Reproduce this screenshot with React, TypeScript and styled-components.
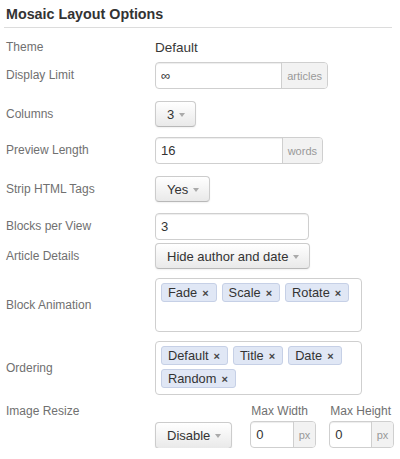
import React from "react";
import styled, { createGlobalStyle } from "styled-components";

const Global = createGlobalStyle`
  html, body { margin: 0; padding: 0; background: #fff; }
  body { font-family: "Liberation Sans", Arial, Helvetica, sans-serif; color: #333; }
`;

const Panel = styled.div`
  width: 392px;
  padding: 0 0 0 4px;
  box-sizing: border-box;
`;

const Title = styled.h2`
  margin: 0;
  padding: 5px 0 4px 2px;
  font-size: 14.3px;
  line-height: 18px;
  font-weight: bold;
  color: #333;
  border-bottom: 1px solid #dcdcdc;
`;

const Body = styled.div`
  padding-left: 2px;
`;

const Row = styled.div<{ $mt: number; $top?: boolean }>`
  display: flex;
  align-items: ${(p) => (p.$top ? "flex-start" : "center")};
  margin-top: ${(p) => p.$mt}px;
`;

const Label = styled.div`
  width: 149px;
  flex-shrink: 0;
  font-size: 12px;
  line-height: 15px;
  color: #707070;
`;

const StaticValue = styled.div`
  font-size: 13.5px;
  line-height: 19px;
  color: #383838;
`;

const InputGroup = styled.div<{ $w: number; $h?: number }>`
  display: inline-flex;
  align-items: stretch;
  box-sizing: border-box;
  width: ${(p) => p.$w}px;
  height: ${(p) => p.$h ?? 27}px;
  border: 1px solid #cfcfcf;
  border-radius: 4px;
  background: #fff;
  box-shadow: inset 0 1px 1px rgba(0, 0, 0, 0.075);
  overflow: hidden;
`;

const Field = styled.input`
  flex: 1;
  min-width: 0;
  border: none;
  outline: none;
  background: transparent;
  padding: 0 5px;
  font-family: "Liberation Sans", Arial, Helvetica, sans-serif;
  font-size: 13px;
  color: #333;
`;

const Addon = styled.span`
  display: flex;
  align-items: center;
  padding: 0 5px;
  border-left: 1px solid #cfcfcf;
  background: #f2f2f2;
  font-size: 11px;
  color: #999;
`;

const DropButton = styled.button<{ $h?: number }>`
  display: inline-flex;
  align-items: center;
  gap: 5px;
  box-sizing: border-box;
  height: ${(p) => p.$h ?? 26}px;
  padding: 0 10px 0 11px;
  border: 1px solid #cccccc;
  border-bottom-color: #b8b8b8;
  border-radius: 4px;
  background: linear-gradient(#ffffff, #e9e9e9);
  box-shadow: 0 1px 2px rgba(0, 0, 0, 0.06);
  font-family: "Liberation Sans", Arial, Helvetica, sans-serif;
  font-size: 13px;
  font-weight: normal;
  color: #333;
  cursor: pointer;
`;

const Caret = styled.span`
  width: 0;
  height: 0;
  border-left: 3.5px solid transparent;
  border-right: 3.5px solid transparent;
  border-top: 4px solid #aaa;
  margin-top: 1px;
`;

const TagBox = styled.div`
  display: flex;
  flex-wrap: wrap;
  align-content: flex-start;
  gap: 4px 5px;
  box-sizing: border-box;
  width: 207px;
  min-height: 54px;
  padding: 4px 5px;
  border: 1px solid #cfcfcf;
  border-radius: 4px;
  background: #fff;
`;

const Tag = styled.span`
  display: inline-flex;
  align-items: center;
  gap: 5px;
  box-sizing: border-box;
  height: 19px;
  padding: 0 7px 0 6px;
  border: 1px solid #c6d0e6;
  border-radius: 3px;
  background: #e0e7f5;
  font-size: 12.8px;
  color: #333;
`;

const TagX = styled.span`
  font-size: 11px;
  font-weight: bold;
  color: #444;
`;

const ResizeControls = styled.div`
  display: flex;
  align-items: flex-end;
  gap: 13px;
`;

const ResizeButtonWrap = styled.div`
  margin-right: 5px;
  margin-bottom: -1px;
`;

const SizeGroup = styled.div`
  display: flex;
  flex-direction: column;
  gap: 2px;
`;

const SizeLabel = styled.div`
  font-size: 12px;
  line-height: 15px;
  color: #707070;
  padding-left: 1px;
`;

const Dropdown = ({ children, h }: { children: React.ReactNode; h?: number }) => (
  <DropButton $h={h}>
    {children}
    <Caret />
  </DropButton>
);

const Tags = ({ items }: { items: string[] }) => (
  <TagBox>
    {items.map((t) => (
      <Tag key={t}>
        {t}
        <TagX>×</TagX>
      </Tag>
    ))}
  </TagBox>
);

export default function App() {
  return (
    <Panel>
      <Global />
      <Title>Mosaic Layout Options</Title>
      <Body>
        <Row $mt={10}>
          <Label>Theme</Label>
          <StaticValue>Default</StaticValue>
        </Row>
        <Row $mt={5}>
          <Label>Display Limit</Label>
          <InputGroup $w={173}>
            <Field defaultValue="∞" readOnly />
            <Addon>articles</Addon>
          </InputGroup>
        </Row>
        <Row $mt={12}>
          <Label>Columns</Label>
          <Dropdown>3</Dropdown>
        </Row>
        <Row $mt={10}>
          <Label>Preview Length</Label>
          <InputGroup $w={168}>
            <Field defaultValue="16" readOnly />
            <Addon>words</Addon>
          </InputGroup>
        </Row>
        <Row $mt={12}>
          <Label>Strip HTML Tags</Label>
          <Dropdown>Yes</Dropdown>
        </Row>
        <Row $mt={11}>
          <Label>Blocks per View</Label>
          <InputGroup $w={154}>
            <Field defaultValue="3" readOnly />
          </InputGroup>
        </Row>
        <Row $mt={3}>
          <Label>Article Details</Label>
          <Dropdown>Hide author and date</Dropdown>
        </Row>
        <Row $mt={9}>
          <Label>Block Animation</Label>
          <Tags items={["Fade", "Scale", "Rotate"]} />
        </Row>
        <Row $mt={9}>
          <Label>Ordering</Label>
          <Tags items={["Default", "Title", "Date", "Random"]} />
        </Row>
        <Row $mt={9} $top>
          <Label>Image Resize</Label>
          <ResizeControls>
            <ResizeButtonWrap>
              <Dropdown h={27}>Disable</Dropdown>
            </ResizeButtonWrap>
            <SizeGroup>
              <SizeLabel>Max Width</SizeLabel>
              <InputGroup $w={66}>
                <Field defaultValue="0" readOnly />
                <Addon>px</Addon>
              </InputGroup>
            </SizeGroup>
            <SizeGroup>
              <SizeLabel>Max Height</SizeLabel>
              <InputGroup $w={65}>
                <Field defaultValue="0" readOnly />
                <Addon>px</Addon>
              </InputGroup>
            </SizeGroup>
          </ResizeControls>
        </Row>
      </Body>
    </Panel>
  );
}
